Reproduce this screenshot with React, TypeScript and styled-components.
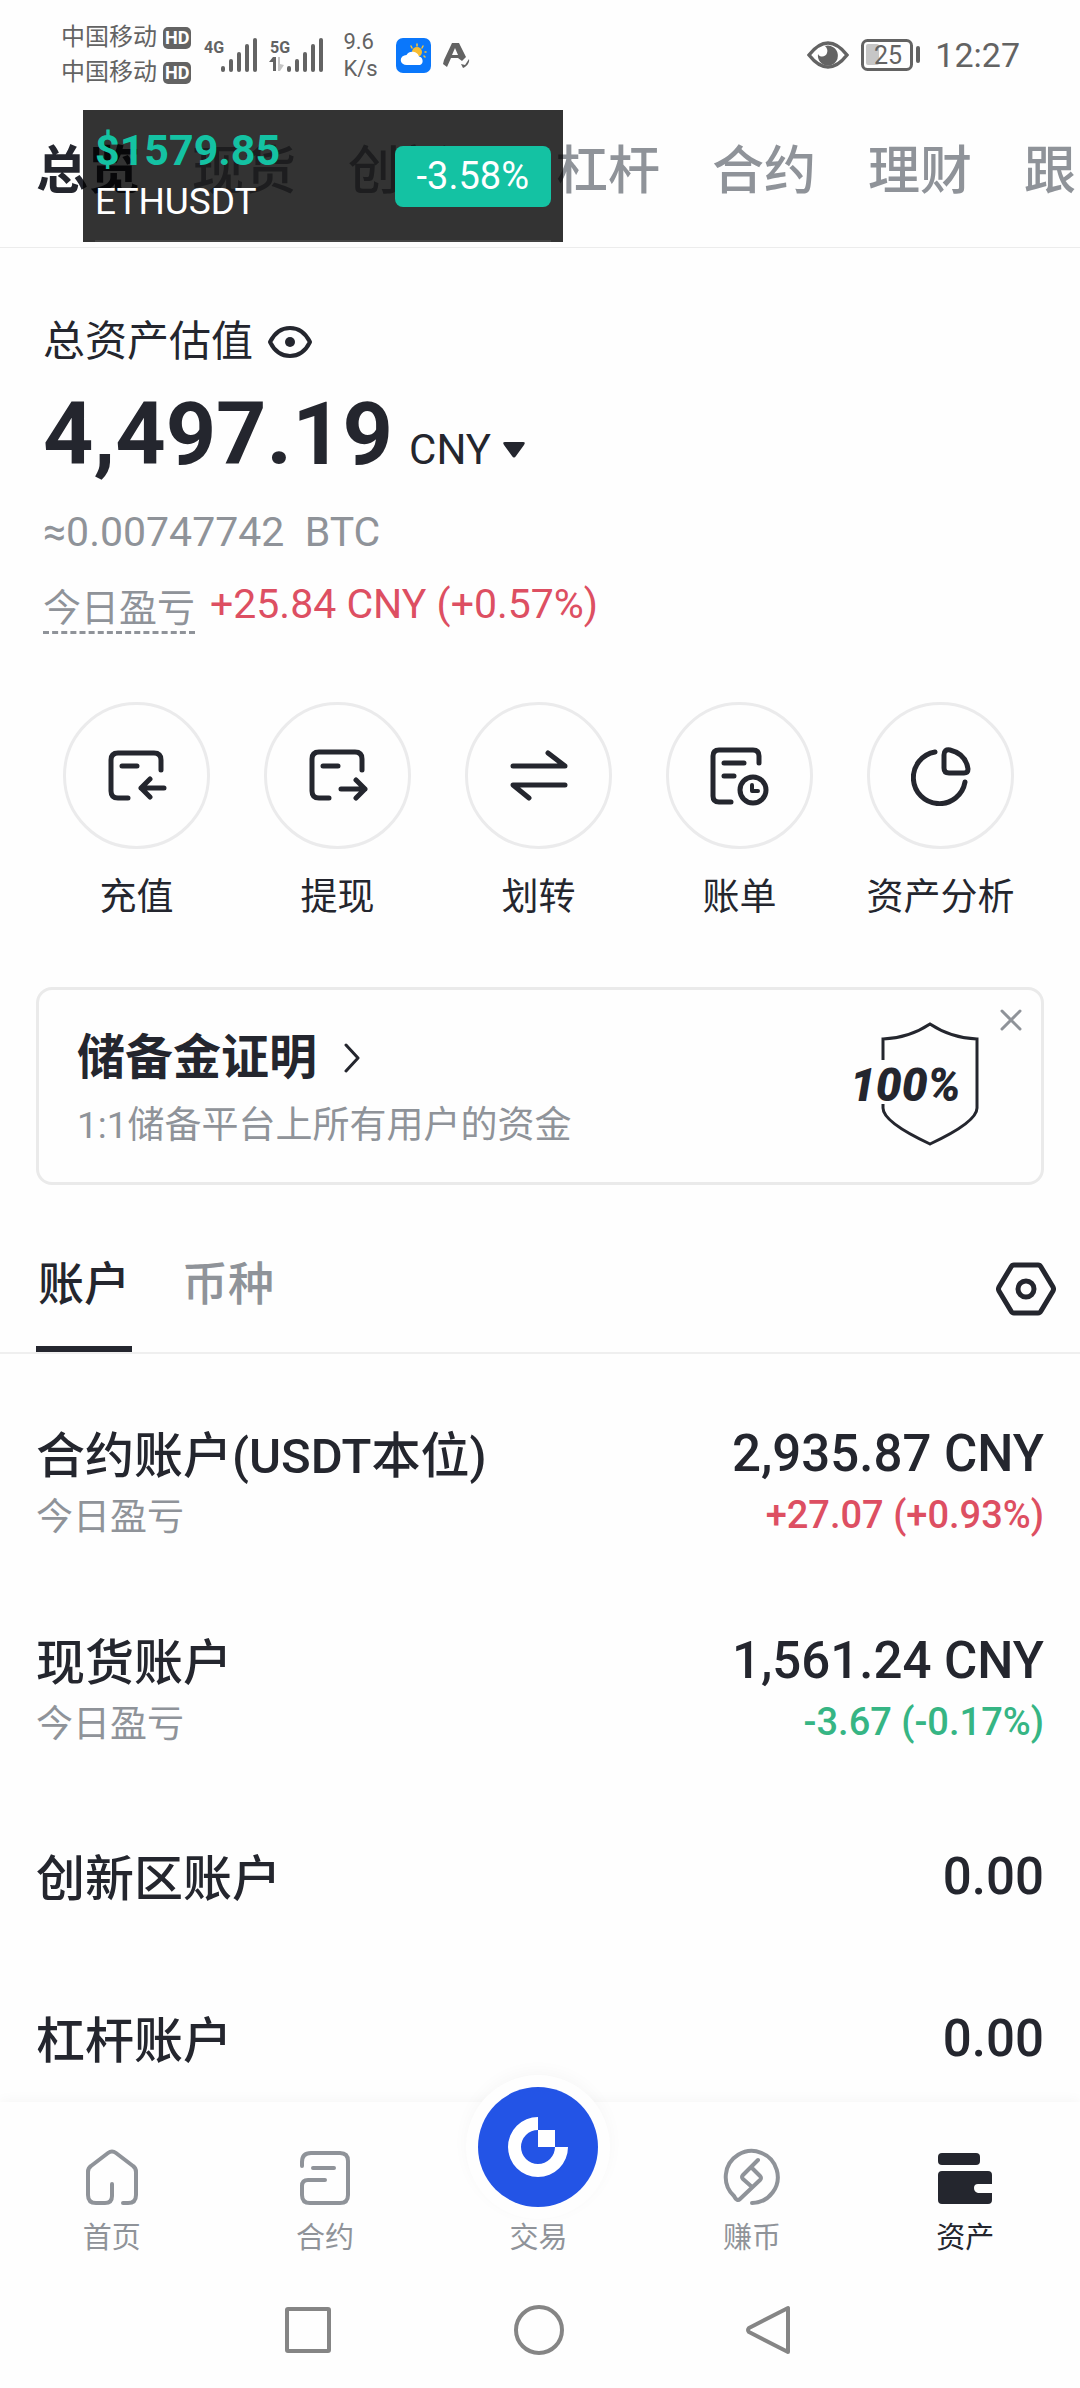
import React, { useState } from 'react';
import styled, { createGlobalStyle } from 'styled-components';

const INK = '#24262e';
const GREY = '#8f9399';
const STATUS = '#636363';
const RED = '#dd4f62';
const GREEN = '#36b584';
const MINT = '#14c2a3';

const GlobalStyle = createGlobalStyle`
  *, *::before, *::after { box-sizing: border-box; }
  body {
    margin: 0;
    background: #fefefe;
    color: ${INK};
    font-family: Roboto, "Noto Sans CJK SC", sans-serif;
  }
  button {
    margin: 0;
    padding: 0;
    border: 0;
    background: none;
    color: inherit;
    font: inherit;
    cursor: pointer;
  }
  a { color: inherit; text-decoration: none; }
  h1, h2, p, ul { margin: 0; padding: 0; font: inherit; }
  ul { list-style: none; }
  svg { display: block; flex: none; }
`;

const Page = styled.div`
  position: relative;
  display: flex;
  flex-direction: column;
  min-height: 100vh;
  overflow-x: hidden;
`;

/* ---------- status bar ---------- */

const StatusBar = styled.header`
  display: flex;
  align-items: center;
  justify-content: space-between;
  height: 110px;
  padding: 0 60px 0 61px;
  color: ${STATUS};
`;

const StatusGroup = styled.div`
  display: flex;
  align-items: center;
  gap: 12px;
`;

const Carriers = styled.div`
  display: flex;
  flex-direction: column;
`;

const Carrier = styled.div`
  display: flex;
  align-items: center;
  gap: 6px;
  font-size: 24px;
  line-height: 35px;
`;

const HdBadge = styled.span`
  padding: 0 2px;
  border-radius: 5px;
  background: ${STATUS};
  color: #fff;
  font-size: 18px;
  font-weight: 700;
  line-height: 22px;
`;

const Speed = styled.div`
  margin: 0 6px 0 8px;
  font-size: 22px;
  line-height: 27px;
`;

const Clock = styled.time`
  margin-left: 2px;
  font-size: 34px;
  line-height: 40px;
`;

const SvgLabel = styled.text`
  font-family: Roboto, sans-serif;
`;

/* ---------- top tabs ---------- */

const TopTabs = styled.nav`
  display: flex;
  gap: 52px;
  padding: 36px 36px 49px;
  border-bottom: 1px solid #ececec;
  overflow: hidden;
`;

const TopTab = styled.button<{ $active: boolean }>`
  flex: none;
  color: ${(p) => (p.$active ? INK : GREY)};
  font-size: 52px;
  font-weight: ${(p) => (p.$active ? 700 : 500)};
  line-height: 52px;
`;

/* ---------- floating price widget ---------- */

const PriceWidget = styled.aside`
  position: absolute;
  top: 110px;
  left: 83px;
  display: flex;
  align-items: center;
  justify-content: space-between;
  width: 480px;
  height: 132px;
  padding: 0 12px;
  background: rgba(0, 0, 0, 0.8);

  &::after {
    content: '';
    position: absolute;
    right: 12px;
    bottom: 0;
    left: 12px;
    height: 2px;
    background: rgba(255, 255, 255, 0.08);
  }
`;

const WidgetPrice = styled.strong`
  display: block;
  color: ${MINT};
  font-size: 43px;
  font-weight: 700;
  line-height: 52px;
`;

const WidgetSymbol = styled.span`
  display: block;
  color: #fff;
  font-size: 37px;
  line-height: 52px;
`;

const WidgetChange = styled.span`
  padding: 0 22px;
  border-radius: 8px;
  background: ${MINT};
  color: #fff;
  font-size: 38px;
  line-height: 61px;
`;

/* ---------- balance summary ---------- */

const Summary = styled.section`
  display: flex;
  flex-direction: column;
  padding: 64px 43px 0;
`;

const SummaryTitle = styled.div`
  display: flex;
  align-items: center;
  gap: 14px;
  font-size: 42px;
  line-height: 60px;
`;

const AmountRow = styled.div`
  display: flex;
  align-items: baseline;
  gap: 16px;
  margin-top: 12px;
  line-height: 100px;
`;

const Amount = styled.strong`
  font-size: 88px;
  font-weight: 700;
`;

const CurrencyButton = styled.button`
  display: flex;
  align-items: center;
  gap: 12px;
  font-size: 42px;
  line-height: 60px;
`;

const BtcValue = styled.p`
  margin-top: 18px;
  color: ${GREY};
  font-size: 41px;
  line-height: 60px;
  white-space: pre;
`;

const TodayRow = styled.div`
  display: flex;
  align-items: flex-end;
  gap: 15px;
  margin-top: 12px;
  font-size: 41px;
  line-height: 60px;
`;

const TodayLabel = styled.button`
  border-bottom: 3px dashed ${GREY};
  color: ${GREY};
  font-size: 38px;
  line-height: 46px;
`;

const Signed = styled.span<{ $up: boolean }>`
  color: ${(p) => (p.$up ? RED : GREEN)};
`;

/* ---------- quick actions ---------- */

const Actions = styled.nav`
  display: grid;
  grid-template-columns: repeat(5, 1fr);
  margin-top: 68px;
  padding: 0 39px 0 36px;
`;

const Action = styled.button`
  display: flex;
  flex-direction: column;
  align-items: center;
  gap: 25px;
  font-size: 37px;
  line-height: 48px;
`;

const ActionCircle = styled.span`
  display: grid;
  place-items: center;
  width: 147px;
  height: 147px;
  border: 3px solid #ebebec;
  border-radius: 50%;
`;

/* ---------- proof of reserves card ---------- */

const ReserveCard = styled.section`
  position: relative;
  display: flex;
  align-items: flex-start;
  justify-content: space-between;
  margin: 65px 36px 0;
  padding: 32px 62px 32px 38px;
  border: 3px solid #eaeaea;
  border-radius: 16px;
`;

const ReserveText = styled.div`
  padding-top: 6px;
`;

const ReserveTitle = styled.h2`
  display: flex;
  align-items: center;
  gap: 26px;
  font-size: 48px;
  font-weight: 700;
  line-height: 60px;
`;

const ReserveNote = styled.p`
  margin-top: 14px;
  color: ${GREY};
  font-size: 37px;
  line-height: 48px;
`;

const CloseButton = styled.button`
  position: absolute;
  top: 18px;
  right: 18px;
`;

/* ---------- account list ---------- */

const ListTabs = styled.div`
  display: flex;
  align-items: flex-start;
  gap: 48px;
  margin-top: 69px;
  padding: 0 24px 0 36px;
  border-bottom: 2px solid #efefef;
`;

const ListTab = styled.button<{ $active: boolean }>`
  padding: 0 2px 32px;
  border-bottom: 6px solid ${(p) => (p.$active ? INK : 'transparent')};
  color: ${(p) => (p.$active ? INK : GREY)};
  font-size: 46px;
  font-weight: 500;
  line-height: 60px;
`;

const SettingsButton = styled.button`
  margin: 8px 0 0 auto;
`;

const AccountList = styled.ul`
  padding: 21px 36px 0;
`;

const AccountRow = styled.li<{ $detailed: boolean }>`
  display: flex;
  justify-content: space-between;
  padding: ${(p) => (p.$detailed ? '50px 0 44px' : '59px 0 39px')};
  &:last-child { padding-bottom: 0; }
`;

const AccountColumn = styled.div<{ $end?: boolean }>`
  display: flex;
  flex-direction: column;
  align-items: ${(p) => (p.$end ? 'flex-end' : 'flex-start')};
  gap: 9px;
`;

const AccountName = styled.span`
  font-size: 49px;
  font-weight: 500;
  line-height: 64px;
`;

const AccountValue = styled.span`
  font-size: 51px;
  font-weight: 500;
  line-height: 58px;
`;

const AccountNote = styled.span`
  color: ${GREY};
  font-size: 37px;
  line-height: 40px;
`;

const AccountChange = styled(Signed)`
  font-size: 38px;
  font-weight: 500;
  line-height: 46px;
`;

/* ---------- bottom navigation ---------- */

const BottomBar = styled.footer`
  margin-top: auto;
  padding: 45px 8px 33px 5px;
  background: #fefefe;
  box-shadow: 0 -2px 12px rgba(0, 0, 0, 0.035);
`;

const BottomNav = styled.nav`
  display: grid;
  grid-template-columns: repeat(5, 1fr);
  align-items: end;
`;

const BottomItem = styled.a<{ $active?: boolean }>`
  display: flex;
  flex-direction: column;
  align-items: center;
  gap: 13px;
  color: ${(p) => (p.$active ? INK : GREY)};
  font-size: 29px;
  line-height: 36px;
`;

const TradeIcon = styled.span`
  display: grid;
  place-items: center;
  width: 120px;
  height: 120px;
  margin-top: -60px;
  border-radius: 50%;
  background: #2354e6;
  box-shadow: 0 0 0 12px #fefefe, 0 -4px 16px 12px rgba(0, 0, 0, 0.03);
`;

const SystemNav = styled.div`
  display: flex;
  justify-content: center;
  gap: 181px;
  margin-top: 49px;
`;

/* ---------- drawings ---------- */

const line = (width: number) => ({
  fill: 'none',
  stroke: 'currentColor',
  strokeWidth: width,
  strokeLinecap: 'round' as const,
  strokeLinejoin: 'round' as const,
});

const Signal = ({ label, data }: { label: string; data?: boolean }) => (
  <svg width="54" height="36" viewBox="0 0 54 36" fill={STATUS}>
    <SvgLabel x="1" y="16" fontSize="16" fontWeight="700">{label}</SvgLabel>
    {data && (
      <>
        <path d="M0 25l4-5h3v14H4V25z" />
        <path d="M9 20h2v7l4 1-4 6H9z" fill="#c4c4c4" />
      </>
    )}
    {[6, 13, 20, 28, 34].map((h, i) => (
      <rect key={h} x={18 + i * 8} y={35 - h} width="4" height={h} rx="2" />
    ))}
  </svg>
);

const WeatherIcon = () => (
  <svg width="35" height="35" viewBox="0 0 35 35">
    <rect width="35" height="35" rx="7" fill="#0a77fb" />
    <g stroke="#f6c338" strokeWidth="1.5" strokeLinecap="round">
      <path d="M21 6v2M15 8l1 2M27 8l-1 2M29 14h1M28 18l1 1" />
    </g>
    <circle cx="21" cy="14" r="5" fill="#f8bd31" />
    <path d="M11 27a6 5 0 0 1-.5-10 7 7 0 0 1 12.500 1.500A4.500 4.500 0 0 1 24 27z" fill="#fff" />
  </svg>
);

const AssistIcon = () => (
  <svg width="27" height="26" viewBox="0 0 27 26" fill={STATUS}>
    <path fillRule="evenodd" d="M9 1h7l7 14-4 4-4-3H8l-4 9-4-3 1-4zM12 6l-3 7h6z" />
    <path d="M18 22l4 1 4-6c1 4-3 8-6 9z" />
  </svg>
);

const EyeCareIcon = () => (
  <svg width="42" height="28" viewBox="0 0 42 28">
    <path d="M2 14C9 5 15 2 21 2s12 3 19 12c-7 9-13 12-19 12S9 23 2 14z" fill="none" stroke={STATUS} strokeWidth="3.500" />
    <path d="M18 5a10 10 0 1 1-7 8c2 4 8 3 9-1 1-3 0-5-2-7z" fill={STATUS} />
  </svg>
);

const BatteryIcon = () => (
  <svg width="60" height="32" viewBox="0 0 60 32">
    <rect x="1.500" y="1.500" width="49" height="29" rx="5" fill="none" stroke={STATUS} strokeWidth="3" />
    <rect x="5" y="5" width="13" height="21" rx="2" fill="#c6c6c6" />
    <rect x="55" y="7" width="4" height="17" rx="2" fill={STATUS} />
    <SvgLabel x="27" y="25" fontSize="25" textAnchor="middle" fill={STATUS}>25</SvgLabel>
  </svg>
);

const EyeIcon = () => (
  <svg width="46" height="34" viewBox="0 0 46 34">
    <path {...line(4)} d="M3 17C8 7 15 3 23 3s15 4 20 14c-5 10-12 14-20 14S8 27 3 17z" />
    <circle cx="23" cy="17" r="5" fill="currentColor" />
  </svg>
);

const CaretIcon = () => (
  <svg width="22" height="16" viewBox="0 0 22 16">
    <path d="M2 0h18q3 0 1 3l-8 11q-2 3-4 0L1 3q-2-3 1-3z" fill="currentColor" />
  </svg>
);

const DepositIcon = () => (
  <svg width="60" height="60" viewBox="0 0 60 60">
    <path {...line(5)} d="M54 24V14q0-7-7-7H11q-7 0-7 7v31q0 7 7 7h10M15 20h15M57 42H34M43 33l-9 9 9 9" />
  </svg>
);

const WithdrawIcon = () => (
  <svg width="60" height="60" viewBox="0 0 60 60">
    <path {...line(5)} d="M54 24V13q0-7-7-7H11q-7 0-7 7v32q0 7 7 7h10M15 20h15M33 43h24M48 34l9 9-9 9" />
  </svg>
);

const TransferIcon = () => (
  <svg width="60" height="60" viewBox="0 0 60 60">
    <path {...line(5)} d="M4 20h52L39 7M56 39H4l16 13" />
  </svg>
);

const BillIcon = () => (
  <svg width="60" height="60" viewBox="0 0 60 60">
    <path {...line(5)} d="M49 17V10q0-6-6-6H9q-6 0-6 6v40q0 6 6 6h12M14 17h20M14 30h10" />
    <circle {...line(5)} cx="43" cy="44" r="13" />
    <path {...line(4)} d="M42 39v6h6" />
  </svg>
);

const PieIcon = () => (
  <svg width="60" height="60" viewBox="0 0 60 60">
    <path {...line(5)} d="M24 6A26 26 0 1 0 54 36" />
    <path {...line(5)} d="M33 9q0-6 6-5 16 4 18 19 0 4-4 4H38q-5 0-5-5z" />
  </svg>
);

const ChevronIcon = () => (
  <svg width="18" height="30" viewBox="0 0 18 30">
    <path {...line(3)} d="M3 2l12 13L3 28" />
  </svg>
);

const CloseIcon = () => (
  <svg width="24" height="24" viewBox="0 0 24 24" color={GREY}>
    <path {...line(3)} d="M3 3l18 18M21 3L3 21" />
  </svg>
);

const ShieldIcon = () => (
  <svg width="128" height="124" viewBox="0 0 128 124">
    <path
      d="M32 38V17Q58 16 79 2q21 14 47 15v69q0 14-47 36Q32 100 32 86v-4"
      fill="none"
      stroke={INK}
      strokeWidth="3"
    />
    <SvgLabel x="-1" y="79" fontSize="46" fontWeight="900" fontStyle="italic" fill={INK}>100%</SvgLabel>
  </svg>
);

const SettingsIcon = () => (
  <svg width="60" height="54" viewBox="0 0 60 54">
    <path {...line(5)} d="M18 3h24q2 0 3 2l12 20q1 2 0 4L45 49q-1 2-3 2H18q-2 0-3-2L3 29q-1-2 0-4L15 5q1-2 3-2z" />
    <circle {...line(5)} cx="30" cy="27" r="8" />
  </svg>
);

const HomeIcon = () => (
  <svg width="60" height="60" viewBox="0 0 60 60">
    <path {...line(4)} d="M30 37v12q0 7-7 7h-9q-8 0-8-8V25q0-4 3-6L26 6q4-3 8 0l17 13q3 2 3 6v23q0 8-8 8h-5" />
  </svg>
);

const ContractIcon = () => (
  <svg width="60" height="60" viewBox="0 0 60 60">
    <path {...line(4)} d="M7 19v-4q0-9 9-9h29q8 0 8 8v34q0 8-8 8H15q-8 0-8-8V39q0-6 6-6h17M18 21h21" />
  </svg>
);

const TradeLogo = () => (
  <svg width="60" height="60" viewBox="0 0 60 60" fill="#fff">
    <path d="M30 0v13a17 17 0 1 0 17 17h13A30 30 0 1 1 30 0z" />
    <path d="M30 13h17v17H30z" />
  </svg>
);

const EarnIcon = () => (
  <svg width="60" height="60" viewBox="0 0 60 60">
    <path {...line(4)} d="M30 56A26 26 0 1 0 12 49q3 6 6 3L38 33q2-2 0-4L30 21M30 40L21 32q-2-2 0-4L36 13" />
  </svg>
);

const WalletIcon = () => (
  <svg width="60" height="60" viewBox="0 0 60 60" fill="currentColor">
    <rect x="3" y="6" width="42" height="12" rx="4" />
    <path d="M7 24h46q4 0 4 4v9H43q-4 0-4 4t4 5h14v7q0 4-4 4H7q-4 0-4-4V28q0-4 4-4z" />
  </svg>
);

const RecentsIcon = () => (
  <svg width="50" height="50" viewBox="0 0 50 50" color="#858585">
    <rect {...line(4)} x="4" y="4" width="42" height="42" rx="1" />
  </svg>
);

const HomeKeyIcon = () => (
  <svg width="50" height="50" viewBox="0 0 50 50" color="#858585">
    <circle {...line(4)} cx="25" cy="25" r="23" />
  </svg>
);

const BackIcon = () => (
  <svg width="50" height="50" viewBox="0 0 50 50" color="#858585">
    <path {...line(4)} d="M43 3v44L4 27q-2-2 0-4z" />
  </svg>
);

/* ---------- data ---------- */

const topTabs = ['总览', '现货', '创新区', '杠杆', '合约', '理财', '跟'];

const actions = [
  { label: '充值', icon: <DepositIcon /> },
  { label: '提现', icon: <WithdrawIcon /> },
  { label: '划转', icon: <TransferIcon /> },
  { label: '账单', icon: <BillIcon /> },
  { label: '资产分析', icon: <PieIcon /> },
];

const accounts = [
  { name: '合约账户(USDT本位)', value: '2,935.87 CNY', change: '+27.07 (+0.93%)', up: true },
  { name: '现货账户', value: '1,561.24 CNY', change: '-3.67 (-0.17%)', up: false },
  { name: '创新区账户', value: '0.00' },
  { name: '杠杆账户', value: '0.00' },
];

export default function App() {
  const [topTab, setTopTab] = useState('总览');
  const [listTab, setListTab] = useState('账户');

  return (
    <Page>
      <GlobalStyle />

      <StatusBar>
        <StatusGroup>
          <Carriers>
            {[1, 2].map((sim) => (
              <Carrier key={sim}>
                中国移动<HdBadge>HD</HdBadge>
              </Carrier>
            ))}
          </Carriers>
          <Signal label="4G" />
          <Signal label="5G" data />
          <Speed>9.6<br />K/s</Speed>
          <WeatherIcon />
          <AssistIcon />
        </StatusGroup>
        <StatusGroup>
          <EyeCareIcon />
          <BatteryIcon />
          <Clock>12:27</Clock>
        </StatusGroup>
      </StatusBar>

      <TopTabs>
        {topTabs.map((tab) => (
          <TopTab key={tab} $active={tab === topTab} onClick={() => setTopTab(tab)}>
            {tab}
          </TopTab>
        ))}
      </TopTabs>

      <PriceWidget>
        <div>
          <WidgetPrice>$1579.85</WidgetPrice>
          <WidgetSymbol>ETHUSDT</WidgetSymbol>
        </div>
        <WidgetChange>-3.58%</WidgetChange>
      </PriceWidget>

      <main>
        <Summary>
          <SummaryTitle>
            <h1>总资产估值</h1>
            <button aria-label="隐藏资产"><EyeIcon /></button>
          </SummaryTitle>
          <AmountRow>
            <Amount>4,497.19</Amount>
            <CurrencyButton>CNY<CaretIcon /></CurrencyButton>
          </AmountRow>
          <BtcValue>≈0.00747742{'  '}BTC</BtcValue>
          <TodayRow>
            <TodayLabel>今日盈亏</TodayLabel>
            <Signed $up>+25.84 CNY (+0.57%)</Signed>
          </TodayRow>
        </Summary>

        <Actions>
          {actions.map(({ label, icon }) => (
            <Action key={label}>
              <ActionCircle>{icon}</ActionCircle>
              {label}
            </Action>
          ))}
        </Actions>

        <ReserveCard>
          <ReserveText>
            <ReserveTitle>储备金证明<ChevronIcon /></ReserveTitle>
            <ReserveNote>1:1储备平台上所有用户的资金</ReserveNote>
          </ReserveText>
          <ShieldIcon />
          <CloseButton aria-label="关闭"><CloseIcon /></CloseButton>
        </ReserveCard>

        <ListTabs>
          {['账户', '币种'].map((tab) => (
            <ListTab key={tab} $active={tab === listTab} onClick={() => setListTab(tab)}>
              {tab}
            </ListTab>
          ))}
          <SettingsButton aria-label="设置"><SettingsIcon /></SettingsButton>
        </ListTabs>

        <AccountList>
          {accounts.map(({ name, value, change, up }) => (
            <AccountRow key={name} $detailed={Boolean(change)}>
              <AccountColumn>
                <AccountName>{name}</AccountName>
                {change && <AccountNote>今日盈亏</AccountNote>}
              </AccountColumn>
              <AccountColumn $end>
                <AccountValue>{value}</AccountValue>
                {change && <AccountChange $up={Boolean(up)}>{change}</AccountChange>}
              </AccountColumn>
            </AccountRow>
          ))}
        </AccountList>
      </main>

      <BottomBar>
        <BottomNav>
          <BottomItem href="#home"><HomeIcon />首页</BottomItem>
          <BottomItem href="#contract"><ContractIcon />合约</BottomItem>
          <BottomItem href="#trade"><TradeIcon><TradeLogo /></TradeIcon>交易</BottomItem>
          <BottomItem href="#earn"><EarnIcon />赚币</BottomItem>
          <BottomItem href="#assets" $active><WalletIcon />资产</BottomItem>
        </BottomNav>
        <SystemNav>
          <button aria-label="最近任务"><RecentsIcon /></button>
          <button aria-label="主屏幕"><HomeKeyIcon /></button>
          <button aria-label="返回"><BackIcon /></button>
        </SystemNav>
      </BottomBar>
    </Page>
  );
}
